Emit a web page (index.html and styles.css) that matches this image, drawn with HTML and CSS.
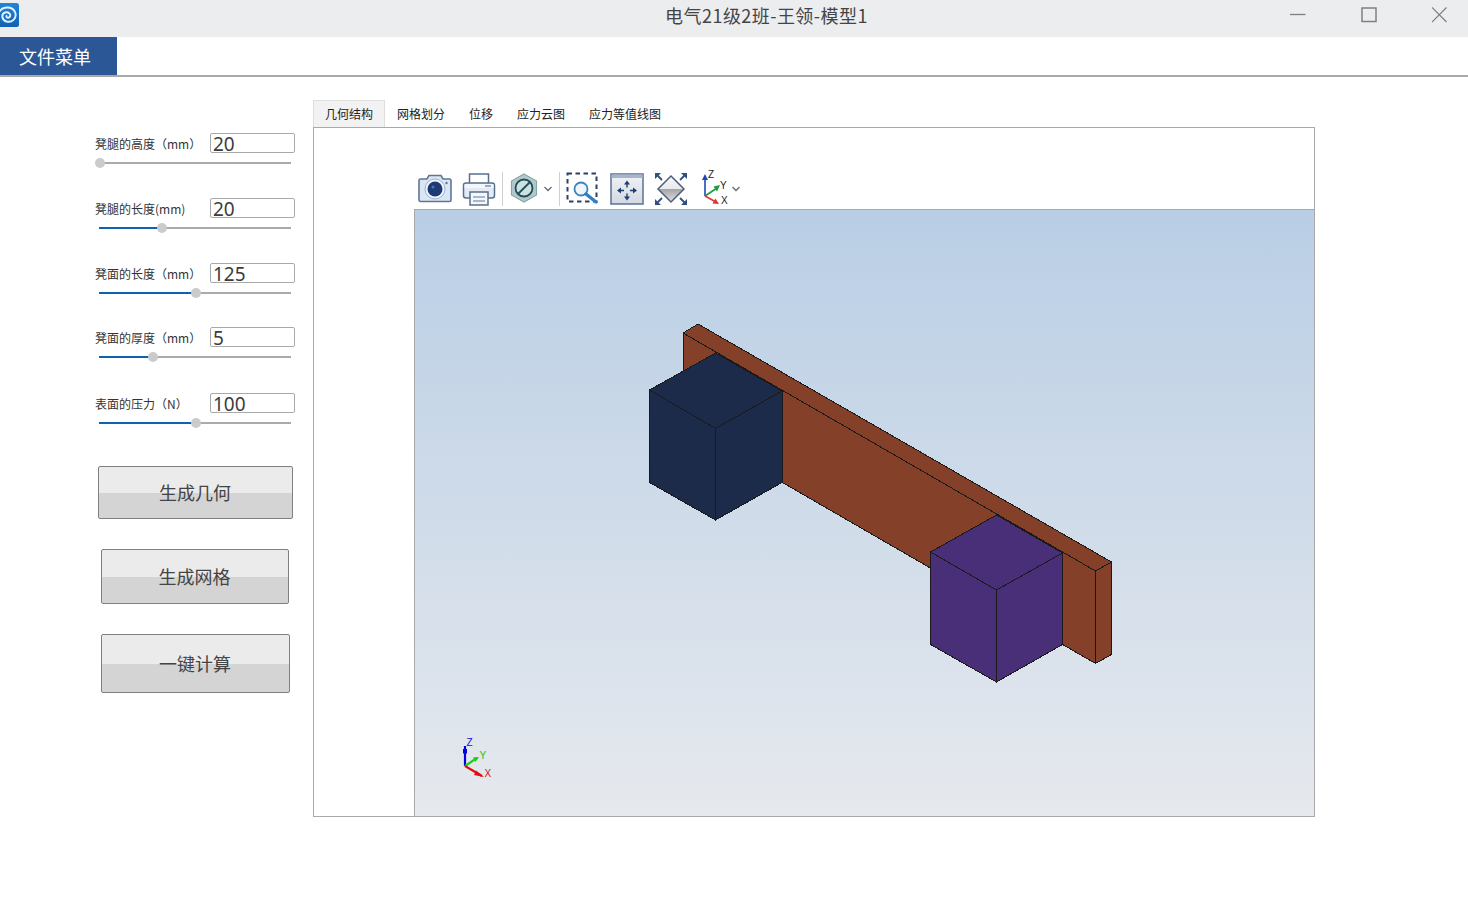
FILE: index.html
```html
<!DOCTYPE html>
<html lang="zh-CN">
<head>
<meta charset="utf-8">
<title>电气21级2班-王领-模型1</title>
<link rel="stylesheet" href="styles.css">
</head>
<body>
<header class="titlebar">
  <svg class="logo" width="20" height="24" viewBox="0 0 20 24">
    <defs><linearGradient id="lg" x1="0" y1="0" x2="0" y2="1"><stop offset="0" stop-color="#1f86d8"/><stop offset="1" stop-color="#1262b4"/></linearGradient></defs>
    <rect x="-6" y="0" width="25" height="24" rx="2.5" fill="url(#lg)"/>
    <path d="M0 8C3 3.500 12 3 15 9C17.500 15 12 20 6.500 18.500C1.500 17 1 11 5 9.500C8.500 8.500 11 11 10 13.500C9 15.500 6 15 6.500 13" fill="none" stroke="#e4f1fa" stroke-width="1.900" stroke-linecap="round"/>
  </svg>
  <div class="title">电气21级2班-王领-模型1</div>
  <div class="winctl">
    <svg width="16" height="16" viewBox="0 0 16 16"><path d="M0 7.500H15.500" stroke="#808080" stroke-width="1.300"/></svg>
    <svg width="16" height="16" viewBox="0 0 16 16"><rect x="1" y="1" width="14" height="13.500" fill="none" stroke="#808080" stroke-width="1.500"/></svg>
    <svg width="16" height="16" viewBox="0 0 16 16"><path d="M0 0.500L14.500 15M14.500 0.500L0 15" stroke="#808080" stroke-width="1.200"/></svg>
  </div>
</header>
<nav class="menubar"><div class="menu-btn">文件菜单</div></nav>
<main class="main">
  <aside class="sidebar">
    <div class="field">
      <div class="field-row"><span class="field-label">凳腿的高度（mm）</span><div class="num">20</div></div>
      <div class="slider"><div class="fill" style="width:0.500%"></div><div class="thumb" style="left:0.500%"></div></div>
    </div>
    <div class="field">
      <div class="field-row"><span class="field-label">凳腿的长度(mm)</span><div class="num">20</div></div>
      <div class="slider"><div class="fill" style="width:32.800%"></div><div class="thumb" style="left:32.800%"></div></div>
    </div>
    <div class="field">
      <div class="field-row"><span class="field-label">凳面的长度（mm）</span><div class="num">125</div></div>
      <div class="slider"><div class="fill" style="width:50.500%"></div><div class="thumb" style="left:50.500%"></div></div>
    </div>
    <div class="field field-up">
      <div class="field-row"><span class="field-label">凳面的厚度（mm）</span><div class="num">5</div></div>
      <div class="slider"><div class="fill" style="width:28.100%"></div><div class="thumb" style="left:28.100%"></div></div>
    </div>
    <div class="field field-down">
      <div class="field-row"><span class="field-label">表面的压力（N）</span><div class="num">100</div></div>
      <div class="slider"><div class="fill" style="width:50.500%"></div><div class="thumb" style="left:50.500%"></div></div>
    </div>
    <button class="btn btn-geo"><span class="btn-text">生成几何</span></button>
    <button class="btn btn-mesh"><span class="btn-text">生成网格</span></button>
    <button class="btn btn-calc"><span class="btn-text">一键计算</span></button>
  </aside>
  <section class="workspace">
    <div class="tabs">
      <div class="tab active">几何结构</div>
      <div class="tab">网格划分</div>
      <div class="tab">位移</div>
      <div class="tab">应力云图</div>
      <div class="tab">应力等值线图</div>
    </div>
    <div class="panel">
      <div class="toolbar">
        <svg class="ic-camera" width="36" height="32" viewBox="0 0 36 32">
          <path d="M2 8.500Q2 7 3.500 7H10L12 3.500H24L26 7H32.500Q34 7 34 8.500V28Q34 29.500 32.500 29.500H3.500Q2 29.500 2 28Z" fill="#dbe6f5" stroke="#5f7698" stroke-width="1.600"/>
          <circle cx="18" cy="17" r="10" fill="#f1f5fb" stroke="#9db1cf"/>
          <circle cx="18" cy="17" r="7.500" fill="#1d3a76"/>
          <circle cx="16" cy="15" r="1.500" fill="#5474ad"/>
          <circle cx="29.500" cy="11" r="1.200" fill="#5f7698"/>
        </svg>
        <svg class="ic-print" width="34" height="34" viewBox="0 0 34 34">
          <path d="M7.500 11V2H26.500V11" fill="#fff" stroke="#56708f" stroke-width="1.500"/>
          <rect x="1.500" y="11" width="31" height="15" rx="2.500" fill="#e3eaf3" stroke="#56708f" stroke-width="1.500"/>
          <rect x="2.500" y="12" width="29" height="4" fill="#f7f9fc" opacity=".8"/>
          <path d="M23 14H29" stroke="#7e92ad" stroke-width="1.500"/>
          <rect x="8" y="20" width="18" height="13" fill="#f4f6fa" stroke="#56708f" stroke-width="1.500"/>
          <path d="M11 25H23M11 29H23" stroke="#8fa2bb" stroke-width="1.300"/>
        </svg>
        <span class="sep sep-a"></span>
        <svg class="ic-hex" width="28" height="30" viewBox="0 0 28 30">
          <path d="M14 1L26.500 8V22L14 29L1.500 22V8Z" fill="#b4c9cc" stroke="#8aa5aa" stroke-width="1.200"/>
          <circle cx="14" cy="15" r="8.500" fill="#cfe0e0" stroke="#1f5057" stroke-width="1.800"/>
          <path d="M8 21L20 9" stroke="#1f5057" stroke-width="1.800"/>
        </svg>
        <svg class="chev chev-a" width="10" height="6" viewBox="0 0 10 6"><path d="M1.500 1L5 4.500L8.500 1" fill="none" stroke="#5f6b78" stroke-width="1.300"/></svg>
        <span class="sep sep-b"></span>
        <svg class="ic-zoom" width="34" height="32" viewBox="0 0 34 32">
          <rect x="1.500" y="1.500" width="29" height="28" fill="none" stroke="#2e4160" stroke-width="2" stroke-dasharray="4.500 3.500"/>
          <circle cx="15" cy="17" r="6.500" fill="#eef5fb" stroke="#3d86bb" stroke-width="1.800"/>
          <path d="M20 22L30 30" stroke="#2f80c2" stroke-width="3.400" stroke-linecap="round"/>
        </svg>
        <svg class="ic-pan" width="34" height="32" viewBox="0 0 34 32">
          <defs><linearGradient id="pg" x1="0" y1="0" x2="0" y2="1"><stop offset="0" stop-color="#f1f3f7"/><stop offset="1" stop-color="#d3d8e2"/></linearGradient></defs>
          <rect x="1" y="1" width="32" height="30" fill="url(#pg)" stroke="#5c7196" stroke-width="1.500"/>
          <rect x="1.500" y="1.500" width="31" height="3.500" fill="#a6b5cc"/>
          <path d="M17 10V14.500M17 20.500V25M9.500 17.500H14M20 17.500H24.500" stroke="#1f3d6c" stroke-width="1.400"/>
          <path d="M17 7.500L20 11.500H14ZM17 27.500L20 23.500H14ZM7 17.500L11 14.500V20.500ZM27 17.500L23 14.500V20.500Z" fill="#1f3d6c"/>
        </svg>
        <svg class="ic-fit" width="34" height="34" viewBox="0 0 34 34">
          <defs><linearGradient id="fg" x1="0" y1="0" x2="0" y2="1"><stop offset="0" stop-color="#f7f7f8"/><stop offset=".5" stop-color="#e9eaec"/><stop offset=".5" stop-color="#a3a4a8"/><stop offset="1" stop-color="#e0e1e4"/></linearGradient></defs>
          <path d="M17 4L30 17L17 30L4 17Z" fill="url(#fg)" stroke="#4e5f79" stroke-width="1.500"/>
          <path d="M1 7V1H7ZM33 7V1H27ZM1 27V33H7ZM33 27V33H27Z" fill="#33507f"/>
          <path d="M2 2L8 8M32 2L26 8M2 32L8 26M32 32L26 26" stroke="#33507f" stroke-width="1.800"/>
        </svg>
        <svg class="ic-axis" width="28" height="36" viewBox="0 0 28 36">
          <path d="M3 26V8" stroke="#1e49b4" stroke-width="1.600"/>
          <path d="M3 4L6 10H0Z" fill="#1e49b4"/>
          <path d="M3 26L15 18" stroke="#1e9a3c" stroke-width="1.600"/>
          <path d="M18 15L15 21.500L11.500 16.500Z" fill="#1e9a3c"/>
          <path d="M3 26L14 32" stroke="#e23232" stroke-width="1.600"/>
          <path d="M17 34L10.500 33.500L13.500 28.500Z" fill="#e23232"/>
          <text class="axis-letter" x="6" y="8">Z</text>
          <text class="axis-letter" x="18" y="19">Y</text>
          <text class="axis-letter" x="19" y="34">X</text>
        </svg>
        <svg class="chev chev-b" width="10" height="6" viewBox="0 0 10 6"><path d="M1.500 1L5 4.500L8.500 1" fill="none" stroke="#5f6b78" stroke-width="1.300"/></svg>
      </div>
      <div class="viewport">
        <svg class="scene" viewBox="415 210 899 606" width="899" height="606">
          <g stroke="#1a1a1a" stroke-width="1" stroke-linejoin="round" shape-rendering="crispEdges">
            <path d="M683 333L698 324L1111.500 562L1095.500 571Z" fill="#844029"/>
            <path d="M683 333L1095.500 571V663.500L683 425Z" fill="#844029"/>
            <path d="M1095.500 571L1111.500 562V654.500L1095.500 663.500Z" fill="#844029"/>
            <path d="M715.500 353L782 391L715.500 428.500L649.500 390Z" fill="#1c2b49"/>
            <path d="M649.500 390L715.500 428.500V520L649.500 482.500Z" fill="#1c2b49"/>
            <path d="M715.500 428.500L782 391V482.500L715.500 520Z" fill="#1c2b49"/>
            <path d="M996.500 515L1062.500 553L996.500 590L930.500 552Z" fill="#482f78"/>
            <path d="M930.500 552L996.500 590V682L930.500 644.500Z" fill="#482f78"/>
            <path d="M996.500 590L1062.500 553V644.500L996.500 682Z" fill="#482f78"/>
          </g>
          <g>
            <path d="M465 766V746" stroke="#0000e0" stroke-width="2.200"/>
            <path d="M463 749H467V753.500H463Z" fill="#0000e0"/>
            <path d="M465 766L477 758" stroke="#18d018" stroke-width="2.200"/>
            <path d="M479 757L473 757.500L475.500 762Z" fill="#18d018"/>
            <path d="M465 766L482 776" stroke="#e01010" stroke-width="2.200"/>
            <path d="M484 777L476 770.500L474 775Z" fill="#e01010"/>
            <text class="triad triad-z" x="466.500" y="746">Z</text>
            <text class="triad triad-y" x="479.500" y="758.500">Y</text>
            <text class="triad triad-x" x="484.500" y="777">X</text>
          </g>
        </svg>
      </div>
    </div>
  </section>
</main>
</body>
</html>
```
FILE: styles.css
```css
* { box-sizing: border-box; }
html, body { margin: 0; padding: 0; }
body {
  width: 1468px;
  height: 916px;
  overflow: hidden;
  background: #fff;
  font-family: "Noto Sans CJK SC", "Noto Sans", sans-serif;
  color: #333;
}

.titlebar {
  position: relative;
  height: 37px;
  background: #ecedef;
  display: flex;
  align-items: flex-start;
}
.logo { flex: none; margin-top: 3px; }
.title {
  position: absolute;
  left: 67px;
  right: 2px;
  top: 3px;
  text-align: center;
  font-size: 18px;
  line-height: 24px;
  color: #444;
  letter-spacing: .45px;
}
.winctl {
  margin-left: auto;
  margin-right: 20px;
  margin-top: 7px;
  display: flex;
  gap: 55px;
}

.menubar {
  height: 40px;
  border-bottom: 2px solid #a9a9a9;
  background: #fff;
}
.menu-btn {
  width: 117px;
  height: 38px;
  background: #2b5797;
  color: #fff;
  font-size: 18px;
  line-height: 39px;
  padding-left: 19px;
}

.main { display: flex; }

.sidebar {
  width: 313px;
  flex: none;
  padding: 56px 0 0 95px;
  display: flex;
  flex-direction: column;
  align-items: flex-start;
}
.field { height: 45px; margin-bottom: 20px; width: 200px; }
.field-up { margin-top: -1px; }
.field-down { margin-top: 1px; margin-bottom: 28px; }
.field-row { display: flex; height: 20px; align-items: flex-start; }
.field-label { width: 115px; flex: none; font-size: 12px; line-height: 22px; color: #333; white-space: nowrap; }
.num {
  width: 85px;
  height: 20px;
  border: 1px solid #a9a9a9;
  border-radius: 2px;
  font-family: "Noto Sans", sans-serif;
  font-size: 19px;
  line-height: 21px;
  padding-left: 2px;
  color: #3c3c3c;
}
.slider {
  position: relative;
  width: 192px;
  height: 2px;
  margin: 9px 0 0 4px;
  background: #aaa;
}
.fill { height: 2px; background: #0f62b0; }
.thumb {
  position: absolute;
  top: -4px;
  width: 10px;
  height: 10px;
  margin-left: -5px;
  border-radius: 50%;
  background: #cbcbcb;
}

.btn {
  display: block;
  padding: 0;
  border: 1px solid #808080;
  border-radius: 2px;
  background: linear-gradient(#ebebeb 0 51%, #d4d4d4 51% 100%);
  font-family: inherit;
  font-size: 18px;
  color: #444;
  text-align: center;
}
.btn-text { display: block; margin: -2px 1px 0 0; }
.btn-geo { width: 195px; height: 53px; margin: 0 0 30px 3px; }
.btn-mesh { width: 188px; height: 55px; margin: 0 0 30px 6px; }
.btn-calc { width: 189px; height: 59px; margin: 0 0 0 6px; }

.workspace { width: 1002px; flex: none; padding-top: 23px; }

.tabs { display: flex; height: 27px; }
.tab {
  padding: 0 12px;
  font-size: 12px;
  line-height: 27px;
  color: #222;
}
.tab.active {
  background: #f2f2f2;
  border: 1px solid #dedede;
  border-bottom: 0;
  padding: 0 11px;
  line-height: 25px;
}

.panel {
  height: 690px;
  border: 1px solid #a9a9a9;
  display: flex;
  flex-direction: column;
}
.toolbar {
  height: 81px;
  margin-left: 100px;
  display: flex;
  align-items: flex-start;
  padding: 0 0 0 3px;
}
.toolbar svg { flex: none; }
.ic-camera { margin-top: 44px; }
.ic-print { margin: 44px 0 0 9px; }
.sep { width: 1px; height: 34px; background: #cfcfcf; margin-top: 44px; flex: none; }
.sep-a { margin-left: 6px; }
.ic-hex { margin: 45px 0 0 7px; }
.chev { margin-top: 58px; }
.chev-a { margin-left: 5px; }
.sep-b { margin-left: 6px; }
.ic-zoom { margin: 44px 0 0 6px; }
.ic-pan { margin: 45px 0 0 10px; }
.ic-fit { margin: 44px 0 0 10px; }
.ic-axis { margin: 42px 0 0 14px; }
.chev-b { margin-left: 1px; }
.axis-letter { font-family: "Liberation Sans", sans-serif; font-size: 10px; fill: #222; }

.viewport {
  flex: 1;
  margin-left: 100px;
  border-top: 1px solid #a9a9a9;
  border-left: 1px solid #a9a9a9;
  background: linear-gradient(#b9cee5, #e6e9ee);
  overflow: hidden;
}
.scene { display: block; }
.triad { font-family: "Liberation Sans", sans-serif; font-size: 10px; }
.triad-z { fill: #1010d0; }
.triad-y { fill: #18c018; }
.triad-x { fill: #d01010; }
```
